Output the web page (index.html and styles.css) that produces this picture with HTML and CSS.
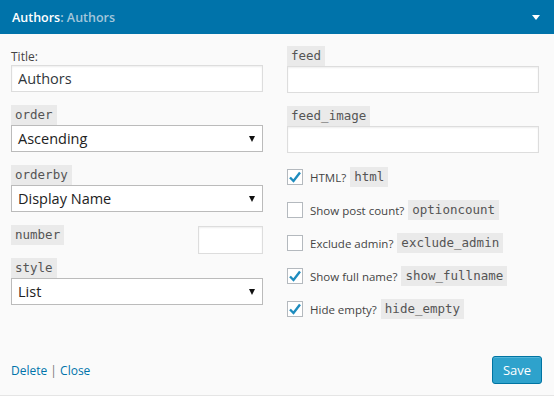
FILE: index.html
```html
<!DOCTYPE html>
<html>
<head>
<meta charset="UTF-8">
<title>Authors widget</title>
<link rel="stylesheet" href="styles.css">
</head>
<body>
	<div class="widget">
		<div class="widget-top">
			<h3 class="widget-title">Authors<span class="in-title">: Authors</span></h3>
			<span class="toggle"></span>
		</div>
		<div class="widget-inside">
			<div class="cols">
				<div class="col">
					<div class="field">
						<label class="plain-label">Title:</label>
						<input class="text" type="text" value="Authors">
					</div>
					<div class="field">
						<code class="key">order</code>
						<div class="select"><span>Ascending</span><span class="arrow"></span></div>
					</div>
					<div class="field">
						<code class="key">orderby</code>
						<div class="select"><span>Display Name</span><span class="arrow"></span></div>
					</div>
					<div class="field number-row">
						<code class="key">number</code>
						<input class="text small" type="text" value="">
					</div>
					<div class="field">
						<code class="key">style</code>
						<div class="select"><span>List</span><span class="arrow"></span></div>
					</div>
				</div>
				<div class="col">
					<div class="field">
						<code class="key">feed</code>
						<input class="text" type="text" value="">
					</div>
					<div class="field">
						<code class="key">feed_image</code>
						<input class="text" type="text" value="">
					</div>
					<div class="checks">
						<div class="check-row">
							<span class="box checked"><svg width="14" height="14" viewBox="0 0 14 14"><path d="M2 7.5 L5.5 11 L12 2.5" fill="none" stroke="#1e8cbe" stroke-width="2.4"/></svg></span>
							<span class="check-text">HTML?</span>
							<code class="key">html</code>
						</div>
						<div class="check-row">
							<span class="box"></span>
							<span class="check-text">Show post count?</span>
							<code class="key">optioncount</code>
						</div>
						<div class="check-row">
							<span class="box"></span>
							<span class="check-text">Exclude admin?</span>
							<code class="key">exclude_admin</code>
						</div>
						<div class="check-row">
							<span class="box checked"><svg width="14" height="14" viewBox="0 0 14 14"><path d="M2 7.5 L5.5 11 L12 2.5" fill="none" stroke="#1e8cbe" stroke-width="2.4"/></svg></span>
							<span class="check-text">Show full name?</span>
							<code class="key">show_fullname</code>
						</div>
						<div class="check-row">
							<span class="box checked"><svg width="14" height="14" viewBox="0 0 14 14"><path d="M2 7.5 L5.5 11 L12 2.5" fill="none" stroke="#1e8cbe" stroke-width="2.4"/></svg></span>
							<span class="check-text">Hide empty?</span>
							<code class="key">hide_empty</code>
						</div>
					</div>
				</div>
			</div>
			<div class="actions">
				<div class="links">
					<a href="#">Delete</a> <span class="sep">|</span> <a href="#">Close</a>
				</div>
				<button class="save">Save</button>
			</div>
		</div>
	</div>
</body>
</html>
```

FILE: styles.css
```css
body{
	margin: 0;
	background: #fafafa;
	font-family: "Open Sans", "Liberation Sans", sans-serif;
	font-size: 12px;
	color: #444;
}
.widget{
	width: 554px;
	height: 395px;
	border-bottom: 1px solid #e5e5e5;
	background: #fafafa;
}
.widget-top{
	height: 34px;
	background: #0073aa;
	display: flex;
	align-items: center;
	justify-content: space-between;
	padding: 0 14px 0 12px;
}
.widget-title{
	margin: 0;
	font-size: 12.5px;
	font-weight: 600;
	color: #fff;
}
.in-title{
	color: #a3c6db;
}
.toggle{
	width: 0;
	height: 0;
	border-left: 4px solid transparent;
	border-right: 4px solid transparent;
	border-top: 5px solid #fff;
}
.widget-inside{
	padding: 12px 12px 0 11px;
}
.cols{
	display: flex;
	gap: 24px;
}
.col{
	width: 252px;
}
.field{
	margin-bottom: 13px;
}
.plain-label{
	display: block;
	height: 17px;
	line-height: 17px;
	margin-top: 2px;
}
.key{
	display: inline-block;
	height: 20px;
	line-height: 20px;
	padding: 0 4px;
	background: #eaeaea;
	font-family: "DejaVu Sans Mono", "Liberation Mono", monospace;
	font-size: 12.5px;
	color: #555;
}
.text{
	display: block;
	box-sizing: border-box;
	width: 100%;
	height: 27px;
	margin: 0;
	padding: 0 6px;
	border: 1px solid #ddd;
	box-shadow: inset 0 1px 2px rgba(0,0,0,.07);
	background: #fff;
	font-family: "Open Sans", "Liberation Sans", sans-serif;
	font-size: 14.5px;
	color: #32373c;
	outline: none;
}
.select{
	box-sizing: border-box;
	height: 27px;
	display: flex;
	align-items: center;
	justify-content: space-between;
	padding: 0 7px 0 6px;
	border: 1px solid #bbb;
	background: #fff;
	font-size: 14.5px;
	color: #222;
}
.arrow{
	width: 0;
	height: 0;
	border-left: 3.5px solid transparent;
	border-right: 3.5px solid transparent;
	border-top: 6px solid #111;
}
.number-row{
	display: flex;
	justify-content: space-between;
	align-items: flex-start;
	margin-bottom: 4px;
}
.text.small{
	width: 65px;
	height: 28px;
	margin-top: 1px;
}
.checks{
	padding-top: 1px;
}
.check-row{
	display: flex;
	align-items: center;
	height: 20px;
	margin-bottom: 13px;
}
.box{
	box-sizing: border-box;
	width: 16px;
	height: 16px;
	border: 1px solid #b4b9be;
	background: #fff;
	display: flex;
	align-items: center;
	justify-content: center;
	margin-right: 7px;
}
.check-text{
	font-size: 11.5px;
	margin-right: 4px;
}
.actions{
	display: flex;
	justify-content: space-between;
	align-items: center;
	margin-top: 24px;
}
.links a{
	color: #0073aa;
	text-decoration: none;
}
.sep{
	color: #777;
}
.save{
	width: 50px;
	height: 28px;
	border: 1px solid #0074a2;
	border-radius: 3px;
	background: #2ea2cc;
	box-shadow: inset 0 1px 0 rgba(120,200,230,.5);
	color: #fff;
	font-family: "Open Sans", "Liberation Sans", sans-serif;
	font-size: 13px;
	padding: 0;
}
```
